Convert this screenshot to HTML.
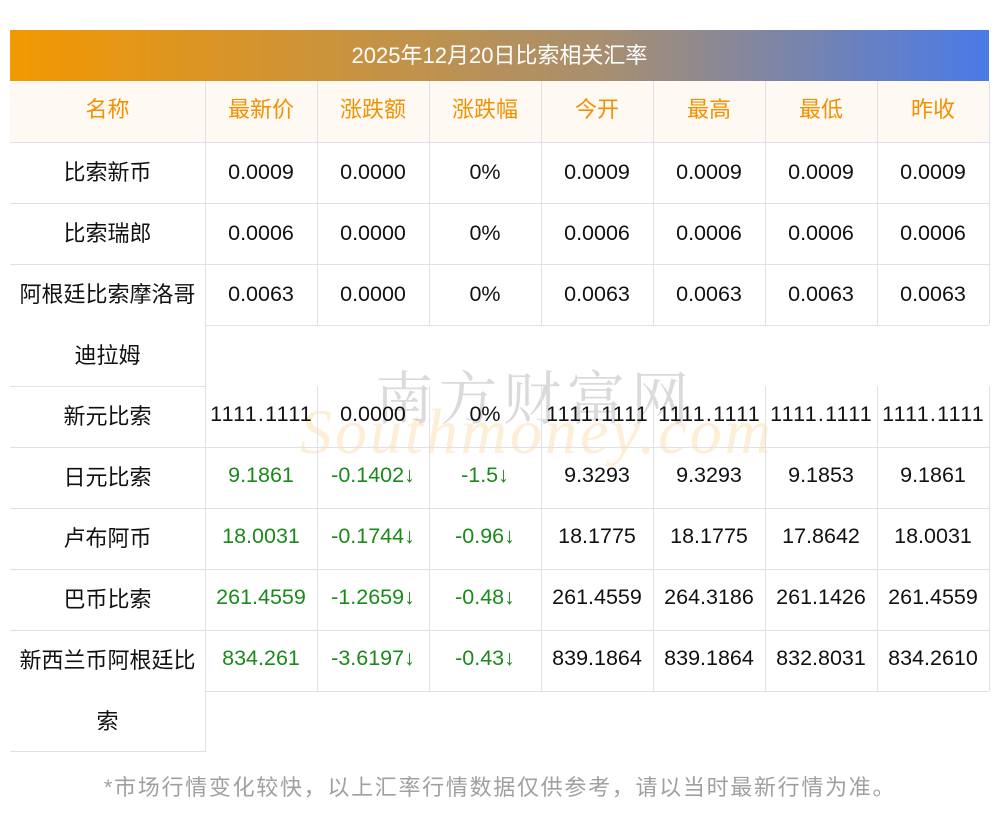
<!DOCTYPE html>
<html><head><meta charset="utf-8"><style>
body{margin:0;width:1000px;height:817px;background:#fff;position:relative;overflow:hidden;font-family:"Liberation Sans","Noto Sans CJK SC",sans-serif;}
.bar{position:absolute;left:10px;top:30px;width:979px;height:51px;background:linear-gradient(90deg,#f39800,#a98f6e 60%,#4a7ae8);color:#fff;font-size:22px;line-height:51px;text-align:center;}
.hd{position:absolute;left:10px;top:81px;width:979px;height:61px;background:#fff9f3;}
.h{position:absolute;background:#e0e0ea;height:1px;}
.v{position:absolute;background:#e0e0ea;width:1px;}
.c{position:absolute;width:112px;height:61px;line-height:61px;text-align:center;font-size:21.5px;color:#111;white-space:nowrap;}
.w{letter-spacing:1.2px;text-indent:1px}
.n{position:absolute;left:10px;width:195px;line-height:61px;text-align:center;font-size:22px;color:#111;}
.o{color:#f39000;font-size:22px}
.g{color:#1a8a1a}
.wm1{position:absolute;left:375px;top:352px;font-size:58px;color:rgba(150,150,150,.35);letter-spacing:6px;font-family:"Noto Serif CJK SC",serif;}
.wm2{position:absolute;left:300px;top:395px;font-size:64px;font-style:italic;color:rgba(253,200,120,.3);font-family:"Liberation Serif",serif;letter-spacing:3px;}
.foot{position:absolute;left:0;width:1000px;top:770px;text-align:center;font-size:22px;color:#a0a0a0;letter-spacing:1.7px;}
</style></head><body>
<div class="bar">2025年12月20日比索相关汇率</div>
<div class="hd"></div>
<div class="wm2">Southmoney.com</div>
<div class="wm1">南方财富网</div>
<div class="h" style="left:10px;top:142px;width:979px"></div>
<div class="h" style="left:10px;top:203px;width:979px"></div>
<div class="h" style="left:10px;top:264px;width:979px"></div>
<div class="h" style="left:205px;top:325px;width:784px"></div>
<div class="h" style="left:10px;top:386px;width:195px"></div>
<div class="h" style="left:10px;top:447px;width:979px"></div>
<div class="h" style="left:10px;top:508px;width:979px"></div>
<div class="h" style="left:10px;top:569px;width:979px"></div>
<div class="h" style="left:10px;top:630px;width:979px"></div>
<div class="h" style="left:205px;top:691px;width:784px"></div>
<div class="h" style="left:10px;top:751px;width:195px"></div>
<div class="v" style="left:205px;top:81px;height:671px"></div>
<div class="v" style="left:317px;top:81px;height:244px"></div><div class="v" style="left:317px;top:386px;height:305px"></div>
<div class="v" style="left:429px;top:81px;height:244px"></div><div class="v" style="left:429px;top:386px;height:305px"></div>
<div class="v" style="left:541px;top:81px;height:244px"></div><div class="v" style="left:541px;top:386px;height:305px"></div>
<div class="v" style="left:653px;top:81px;height:244px"></div><div class="v" style="left:653px;top:386px;height:305px"></div>
<div class="v" style="left:765px;top:81px;height:244px"></div><div class="v" style="left:765px;top:386px;height:305px"></div>
<div class="v" style="left:877px;top:81px;height:244px"></div><div class="v" style="left:877px;top:386px;height:305px"></div>
<div class="v" style="left:989px;top:81px;height:244px"></div><div class="v" style="left:989px;top:386px;height:305px"></div>
<div class="n o" style="top:79px">名称</div>
<div class="c o" style="left:205px;top:79px">最新价</div>
<div class="c o" style="left:317px;top:79px">涨跌额</div>
<div class="c o" style="left:429px;top:79px">涨跌幅</div>
<div class="c o" style="left:541px;top:79px">今开</div>
<div class="c o" style="left:653px;top:79px">最高</div>
<div class="c o" style="left:765px;top:79px">最低</div>
<div class="c o" style="left:877px;top:79px">昨收</div>
<div class="n" style="top:142px">比索新币</div>
<div class="c" style="left:205px;top:142px">0.0009</div><div class="c" style="left:317px;top:142px">0.0000</div><div class="c" style="left:429px;top:142px">0%</div><div class="c" style="left:541px;top:142px">0.0009</div><div class="c" style="left:653px;top:142px">0.0009</div><div class="c" style="left:765px;top:142px">0.0009</div><div class="c" style="left:877px;top:142px">0.0009</div>
<div class="n" style="top:203px">比索瑞郎</div>
<div class="c" style="left:205px;top:203px">0.0006</div><div class="c" style="left:317px;top:203px">0.0000</div><div class="c" style="left:429px;top:203px">0%</div><div class="c" style="left:541px;top:203px">0.0006</div><div class="c" style="left:653px;top:203px">0.0006</div><div class="c" style="left:765px;top:203px">0.0006</div><div class="c" style="left:877px;top:203px">0.0006</div>
<div class="n" style="top:264px">阿根廷比索摩洛哥<br>迪拉姆</div>
<div class="c" style="left:205px;top:264px">0.0063</div><div class="c" style="left:317px;top:264px">0.0000</div><div class="c" style="left:429px;top:264px">0%</div><div class="c" style="left:541px;top:264px">0.0063</div><div class="c" style="left:653px;top:264px">0.0063</div><div class="c" style="left:765px;top:264px">0.0063</div><div class="c" style="left:877px;top:264px">0.0063</div>
<div class="n" style="top:386px">新元比索</div>
<div class="c w" style="left:205px;top:384px">1111.1111</div><div class="c" style="left:317px;top:384px">0.0000</div><div class="c" style="left:429px;top:384px">0%</div><div class="c w" style="left:541px;top:384px">1111.1111</div><div class="c w" style="left:653px;top:384px">1111.1111</div><div class="c w" style="left:765px;top:384px">1111.1111</div><div class="c w" style="left:877px;top:384px">1111.1111</div>
<div class="n" style="top:447px">日元比索</div>
<div class="c g" style="left:205px;top:445px">9.1861</div><div class="c g" style="left:317px;top:445px">-0.1402↓</div><div class="c g" style="left:429px;top:445px">-1.5↓</div><div class="c" style="left:541px;top:445px">9.3293</div><div class="c" style="left:653px;top:445px">9.3293</div><div class="c" style="left:765px;top:445px">9.1853</div><div class="c" style="left:877px;top:445px">9.1861</div>
<div class="n" style="top:508px">卢布阿币</div>
<div class="c g" style="left:205px;top:506px">18.0031</div><div class="c g" style="left:317px;top:506px">-0.1744↓</div><div class="c g" style="left:429px;top:506px">-0.96↓</div><div class="c" style="left:541px;top:506px">18.1775</div><div class="c" style="left:653px;top:506px">18.1775</div><div class="c" style="left:765px;top:506px">17.8642</div><div class="c" style="left:877px;top:506px">18.0031</div>
<div class="n" style="top:569px">巴币比索</div>
<div class="c g" style="left:205px;top:567px">261.4559</div><div class="c g" style="left:317px;top:567px">-1.2659↓</div><div class="c g" style="left:429px;top:567px">-0.48↓</div><div class="c" style="left:541px;top:567px">261.4559</div><div class="c" style="left:653px;top:567px">264.3186</div><div class="c" style="left:765px;top:567px">261.1426</div><div class="c" style="left:877px;top:567px">261.4559</div>
<div class="n" style="top:630px">新西兰币阿根廷比<br>索</div>
<div class="c g" style="left:205px;top:628px">834.261</div><div class="c g" style="left:317px;top:628px">-3.6197↓</div><div class="c g" style="left:429px;top:628px">-0.43↓</div><div class="c" style="left:541px;top:628px">839.1864</div><div class="c" style="left:653px;top:628px">839.1864</div><div class="c" style="left:765px;top:628px">832.8031</div><div class="c" style="left:877px;top:628px">834.2610</div>
<div class="foot">*市场行情变化较快，以上汇率行情数据仅供参考，请以当时最新行情为准。</div>
</body></html>
